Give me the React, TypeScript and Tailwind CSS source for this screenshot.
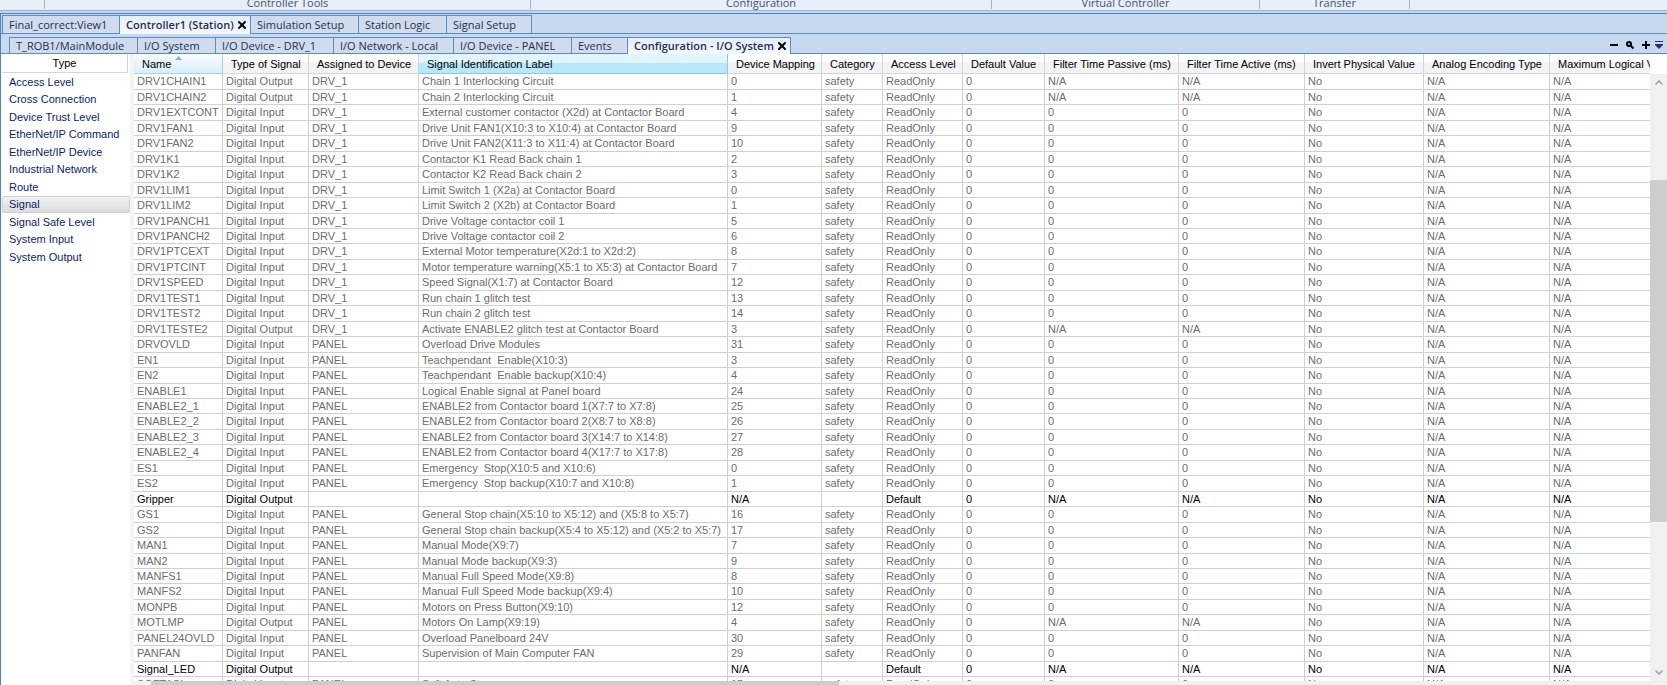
import { FiX } from "react-icons/fi";
import clsx from "clsx";

/** Tab shown in one of the two document strips */
type Tab = { label: string; width: string; active?: boolean };

const windowTabs: Tab[] = [
  { label: "Final_correct:View1", width: "w-[117px]" },
  { label: "Controller1 (Station)", width: "w-[131px]", active: true },
  { label: "Simulation Setup", width: "w-[108px]" },
  { label: "Station Logic", width: "w-[88px]" },
  { label: "Signal Setup", width: "w-[85px]" },
];

const documentTabs: Tab[] = [
  { label: "T_ROB1/MainModule", width: "w-[128px]" },
  { label: "I/O System", width: "w-[78px]" },
  { label: "I/O Device - DRV_1", width: "w-[118px]" },
  { label: "I/O Network - Local", width: "w-[120px]" },
  { label: "I/O Device - PANEL", width: "w-[118px]" },
  { label: "Events", width: "w-[56px]" },
  { label: "Configuration - I/O System", width: "w-[163px]", active: true },
];

const ribbonGroups = [
  { label: "", width: "w-[45px]" },
  { label: "Controller Tools", width: "w-[486px]" },
  { label: "Configuration", width: "w-[461px]" },
  { label: "Virtual Controller", width: "w-[268px]" },
  { label: "Transfer", width: "w-[150px]" },
];

const types = [
  "Access Level",
  "Cross Connection",
  "Device Trust Level",
  "EtherNet/IP Command",
  "EtherNet/IP Device",
  "Industrial Network",
  "Route",
  "Signal",
  "Signal Safe Level",
  "System Input",
  "System Output",
];

const columns = [
  { label: "Name", width: "w-[89px]" },
  { label: "Type of Signal", width: "w-[86px]" },
  { label: "Assigned to Device", width: "w-[110px]" },
  { label: "Signal Identification Label", width: "w-[309px]" },
  { label: "Device Mapping", width: "w-[94px]" },
  { label: "Category", width: "w-[61px]" },
  { label: "Access Level", width: "w-[80px]" },
  { label: "Default Value", width: "w-[82px]" },
  { label: "Filter Time Passive (ms)", width: "w-[134px]" },
  { label: "Filter Time Active (ms)", width: "w-[126px]" },
  { label: "Invert Physical Value", width: "w-[119px]" },
  { label: "Analog Encoding Type", width: "w-[126px]" },
  { label: "Maximum Logical Value", width: "w-[142px]" },
];

// name, direction, device, label, mapping
type Signal = [string, "Input" | "Output", string, string, string];

const signals: Signal[] = [
  ["DRV1CHAIN1", "Output", "DRV_1", "Chain 1 Interlocking Circuit", "0"],
  ["DRV1CHAIN2", "Output", "DRV_1", "Chain 2 Interlocking Circuit", "1"],
  ["DRV1EXTCONT", "Input", "DRV_1", "External customer contactor (X2d) at Contactor Board", "4"],
  ["DRV1FAN1", "Input", "DRV_1", "Drive Unit FAN1(X10:3 to X10:4) at Contactor Board", "9"],
  ["DRV1FAN2", "Input", "DRV_1", "Drive Unit FAN2(X11:3 to X11:4) at Contactor Board", "10"],
  ["DRV1K1", "Input", "DRV_1", "Contactor K1 Read Back chain 1", "2"],
  ["DRV1K2", "Input", "DRV_1", "Contactor K2 Read Back chain 2", "3"],
  ["DRV1LIM1", "Input", "DRV_1", "Limit Switch 1 (X2a) at Contactor Board", "0"],
  ["DRV1LIM2", "Input", "DRV_1", "Limit Switch 2 (X2b) at Contactor Board", "1"],
  ["DRV1PANCH1", "Input", "DRV_1", "Drive Voltage contactor coil 1", "5"],
  ["DRV1PANCH2", "Input", "DRV_1", "Drive Voltage contactor coil 2", "6"],
  ["DRV1PTCEXT", "Input", "DRV_1", "External Motor temperature(X2d:1 to X2d:2)", "8"],
  ["DRV1PTCINT", "Input", "DRV_1", "Motor temperature warning(X5:1 to X5:3) at Contactor Board", "7"],
  ["DRV1SPEED", "Input", "DRV_1", "Speed Signal(X1:7) at Contactor Board", "12"],
  ["DRV1TEST1", "Input", "DRV_1", "Run chain 1 glitch test", "13"],
  ["DRV1TEST2", "Input", "DRV_1", "Run chain 2 glitch test", "14"],
  ["DRV1TESTE2", "Output", "DRV_1", "Activate ENABLE2 glitch test at Contactor Board", "3"],
  ["DRVOVLD", "Input", "PANEL", "Overload Drive Modules", "31"],
  ["EN1", "Input", "PANEL", "Teachpendant  Enable(X10:3)", "3"],
  ["EN2", "Input", "PANEL", "Teachpendant  Enable backup(X10:4)", "4"],
  ["ENABLE1", "Input", "PANEL", "Logical Enable signal at Panel board", "24"],
  ["ENABLE2_1", "Input", "PANEL", "ENABLE2 from Contactor board 1(X7:7 to X7:8)", "25"],
  ["ENABLE2_2", "Input", "PANEL", "ENABLE2 from Contactor board 2(X8:7 to X8:8)", "26"],
  ["ENABLE2_3", "Input", "PANEL", "ENABLE2 from Contactor board 3(X14:7 to X14:8)", "27"],
  ["ENABLE2_4", "Input", "PANEL", "ENABLE2 from Contactor board 4(X17:7 to X17:8)", "28"],
  ["ES1", "Input", "PANEL", "Emergency  Stop(X10:5 and X10:6)", "0"],
  ["ES2", "Input", "PANEL", "Emergency  Stop backup(X10:7 and X10:8)", "1"],
  ["Gripper", "Output", "", "", "N/A"],
  ["GS1", "Input", "PANEL", "General Stop chain(X5:10 to X5:12) and (X5:8 to X5:7)", "16"],
  ["GS2", "Input", "PANEL", "General Stop chain backup(X5:4 to X5:12) and (X5:2 to X5:7)", "17"],
  ["MAN1", "Input", "PANEL", "Manual Mode(X9:7)", "7"],
  ["MAN2", "Input", "PANEL", "Manual Mode backup(X9:3)", "9"],
  ["MANFS1", "Input", "PANEL", "Manual Full Speed Mode(X9:8)", "8"],
  ["MANFS2", "Input", "PANEL", "Manual Full Speed Mode backup(X9:4)", "10"],
  ["MONPB", "Input", "PANEL", "Motors on Press Button(X9:10)", "12"],
  ["MOTLMP", "Output", "PANEL", "Motors On Lamp(X9:19)", "4"],
  ["PANEL24OVLD", "Input", "PANEL", "Overload Panelboard 24V", "30"],
  ["PANFAN", "Input", "PANEL", "Supervision of Main Computer FAN", "29"],
  ["Signal_LED", "Output", "", "", "N/A"],
  ["SOFTASI", "Input", "PANEL", "Soft Auto Stop", "15"],
];

// Signals without a device are user defined: no category, default access
function toCells([name, direction, device, label, mapping]: Signal) {
  const filter = direction === "Output" ? "N/A" : "0";
  return [
    name,
    `Digital ${direction}`,
    device,
    label,
    mapping,
    device ? "safety" : "",
    device ? "ReadOnly" : "Default",
    "0",
    filter,
    filter,
    "No",
    "N/A",
    "N/A",
  ];
}

function Ribbon() {
  return (
    <header className="flex h-[11px] shrink-0 overflow-hidden border-b border-[#9fb3cd] bg-[#e7eff8]">
      {ribbonGroups.map((group) => (
        <div
          key={group.width}
          className={clsx(
            "mb-px flex shrink-0 items-end justify-center border-r border-[#a3b5cd] text-[11px] leading-3 text-[#44546f]",
            group.width
          )}
        >
          {group.label}
        </div>
      ))}
    </header>
  );
}

function TabButton({ tab }: { tab: Tab }) {
  return (
    <button
      type="button"
      role="tab"
      aria-selected={!!tab.active}
      className={clsx(
        "flex shrink-0 items-center gap-0.5 border-t border-r border-[#5b8cc4] pl-1.5 text-[11px] leading-4 whitespace-nowrap text-[#1e2f52]",
        tab.width,
        tab.active
          ? "bg-linear-to-b from-[#e4eef9] to-[#f5f9fe] font-semibold"
          : "border-b bg-[#d0dcec]"
      )}
    >
      {tab.label}
      {tab.active && <FiX className="size-3 shrink-0 text-black" strokeWidth={4} />}
    </button>
  );
}

function StripTools() {
  return (
    <div className="flex items-center gap-[5px] pr-1 text-black">
      <div className="flex items-center gap-2">
        <button type="button" aria-label="Zoom out">
          <svg className="size-2" viewBox="0 0 8 8"><path d="M0 3h8v2H0z" /></svg>
        </button>
        <button type="button" aria-label="Zoom">
          <svg className="size-2" viewBox="0 0 8 8" fill="none" stroke="currentColor" strokeWidth="2">
            <circle cx="3" cy="3" r="2" />
            <path d="M4.500 4.500L7.500 7.500" />
          </svg>
        </button>
        <button type="button" aria-label="Zoom in">
          <svg className="size-2" viewBox="0 0 8 8"><path d="M0 3h3V0h2v3h3v2H5v3H3V5H0z" /></svg>
        </button>
      </div>
      <button type="button" aria-label="Open documents">
        <svg className="size-2" viewBox="0 0 8 8" fill="#1e3a66"><path d="M0 0h8v1H0zM0 3h8v1L4 8L0 4z" /></svg>
      </button>
    </div>
  );
}

function TypeList() {
  return (
    <nav className="w-[129px] shrink-0 pl-px" aria-label="Type">
      <div className="mr-0.5 h-[19px] border-r border-b border-[#d5d5d5] text-center leading-[18px] text-black">
        Type
      </div>
      <ul>
        {types.map((type) => (
          <li key={type} className="odd:h-[18px] even:h-[17px]">
            <button
              type="button"
              className={clsx(
                "h-full w-full rounded-xs border pl-1.5 text-left leading-[15px] text-[#0a1d6b]",
                type === "Signal"
                  ? "border-[#d0d0d0] bg-linear-to-b from-[#f2f2f2] to-[#dcdcdc]"
                  : "border-transparent"
              )}
            >
              {type}
            </button>
          </li>
        ))}
      </ul>
    </nav>
  );
}

function SignalTable() {
  return (
    <table className="w-[1558px] table-fixed border-separate border-spacing-0">
      <thead>
        <tr className="h-5">
          {columns.map(({ label, width }) => (
            <th
              key={label}
              className={clsx(
                "relative border-r border-b p-0 pl-2 text-left leading-4 font-normal whitespace-nowrap text-black",
                width,
                label === "Name" && "border-[#96d9f9] bg-linear-to-b from-[#f7fcfe] to-[#d9eef9]",
                label === "Signal Identification Label" &&
                  "border-[#88cbeb] bg-linear-to-b from-[#e0f5fe] from-45% to-[#b7e7fb] to-50%",
                label !== "Name" &&
                  label !== "Signal Identification Label" &&
                  "border-[#d5d5d5] bg-linear-to-b from-white from-40% to-[#f2f3f4] to-45%"
              )}
            >
              {label}
              {label === "Name" && (
                <svg className="absolute top-0.5 left-[41px] h-1 w-[7px]" viewBox="0 0 7 4" fill="#8ab0c4">
                  <path d="M0 4L3.500 0L7 4z" />
                </svg>
              )}
            </th>
          ))}
        </tr>
      </thead>
      <tbody>
        {signals.map((signal, row) => (
          <tr
            key={signal[0]}
            className={clsx(
              (row % 11) % 2 === 0 && row % 11 !== 10 ? "h-4" : "h-[15px]",
              signal[2] ? "text-[#6d6d6d]" : "text-black"
            )}
          >
            {toCells(signal).map((cell, i) => (
              <td
                key={columns[i].label}
                className="border-r border-b border-[#d0d0d0] p-0 pl-[3px] align-top leading-[14px] whitespace-pre"
              >
                {cell}
              </td>
            ))}
          </tr>
        ))}
      </tbody>
    </table>
  );
}

function VerticalScrollbar() {
  return (
    <div className="flex w-[17px] shrink-0 flex-col bg-white pt-5">
      <div className="flex flex-1 flex-col bg-[#f0f0f0]">
        <button type="button" aria-label="Scroll up" className="flex h-[17px] items-center justify-center">
          <svg className="h-[5px] w-2" viewBox="0 0 8 5" fill="none" stroke="#a0a0a0" strokeWidth="1.500">
            <path d="M.5 4.500L4 1l3.500 3.500" />
          </svg>
        </button>
        <div className="flex flex-1 flex-col">
          <div className="flex-[89]" />
          <div className="flex-[343] bg-[#cdcdcd]" />
          <div className="flex-[142]" />
        </div>
        <button type="button" aria-label="Scroll down" className="flex h-[17px] items-center justify-center">
          <svg className="h-[5px] w-2" viewBox="0 0 8 5" fill="none" stroke="#a0a0a0" strokeWidth="1.500">
            <path d="M.5 .5L4 4L7.500 .5" />
          </svg>
        </button>
      </div>
    </div>
  );
}

export default function App() {
  return (
    <div className="flex h-screen flex-col overflow-hidden bg-[#c7d9ee] font-['Open_Sans',sans-serif]">
      <Ribbon />
      <div className="h-0.5 shrink-0 bg-[#bed6f2]" />
      <main className="flex min-h-0 flex-1 flex-col border-t border-l border-[#4f81bd]">
        <div role="tablist" className="flex h-5 shrink-0 pt-px">
          <div className="w-px border-b border-[#5b8cc4]" />
          <div className="w-px shrink-0 bg-[#5b8cc4]" />
          {windowTabs.map((tab) => (
            <TabButton key={tab.label} tab={tab} />
          ))}
          <div className="flex-1 border-b border-[#5b8cc4]" />
        </div>
        <div role="tablist" className="flex h-5 shrink-0 pt-[3px]">
          <div className="w-2 border-b border-[#5b8cc4]" />
          <div className="w-px shrink-0 bg-[#5b8cc4]" />
          {documentTabs.map((tab) => (
            <TabButton key={tab.label} tab={tab} />
          ))}
          <div className="flex flex-1 justify-end border-b border-[#5b8cc4]">
            <StripTools />
          </div>
        </div>
        <section className="flex min-h-0 flex-1 bg-white font-['Liberation_Sans',Arial,sans-serif] text-[11px]">
          <TypeList />
          <div className="w-1 shrink-0 bg-[#f4f4f4]" />
          <div className="flex min-w-0 flex-1 flex-col">
            <div className="flex min-h-0 flex-1">
              <div className="min-w-0 flex-1 overflow-hidden">
                <SignalTable />
              </div>
              <VerticalScrollbar />
            </div>
            <div className="flex h-1 shrink-0 bg-[#f0f0f0] pl-[17px]">
              <div className="w-[688px] bg-[#cdcdcd]" />
            </div>
          </div>
        </section>
      </main>
    </div>
  );
}
